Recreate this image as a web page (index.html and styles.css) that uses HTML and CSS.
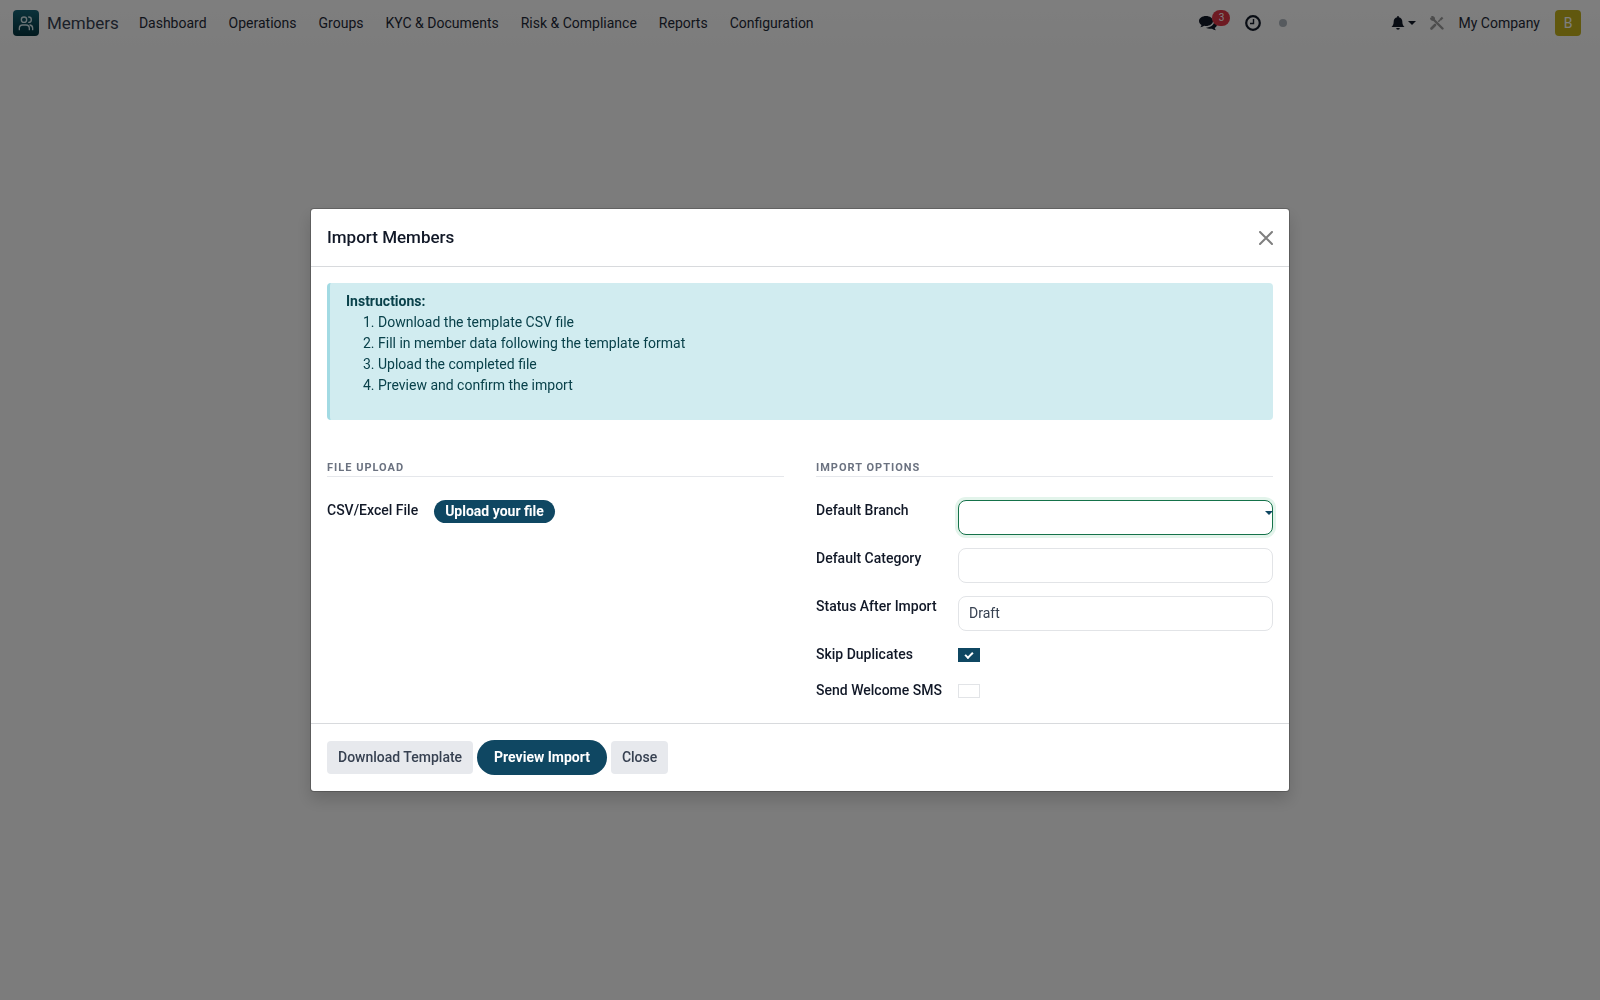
FILE: index.html
```html
<!DOCTYPE html>
<html lang="en">
<head>
    <meta charset="UTF-8">
    <meta name="viewport" content="width=device-width, initial-scale=1.0">
    <title>Members</title>
    <link rel="stylesheet" href="styles.css">
</head>
<body>
    <header class="navbar">
        <a href="#" class="brand">
            <span class="app-icon">
                <svg width="16" height="16" viewBox="0 0 24 24" fill="none" stroke="currentColor" stroke-width="2" stroke-linecap="round">
                    <circle cx="9" cy="7" r="4"/>
                    <path d="M2 22v-2a5 5 0 0 1 5-5h5a5 5 0 0 1 5 5v2"/>
                    <path d="M16 3a4 4 0 0 1 0 8"/>
                    <path d="M18 15a5 5 0 0 1 4 5v2"/>
                </svg>
            </span>
            Members
        </a>
        <nav class="menu">
            <a href="#">Dashboard</a>
            <a href="#">Operations</a>
            <a href="#">Groups</a>
            <a href="#">KYC &amp; Documents</a>
            <a href="#">Risk &amp; Compliance</a>
            <a href="#">Reports</a>
            <a href="#">Configuration</a>
        </nav>
        <div class="systray">
            <button type="button" class="tray-button messages" aria-label="Messages">
                <svg width="18" height="16" viewBox="0 0 18 16" fill="currentColor">
                    <path d="M7 1c3.900 0 7 2.200 7 5s-3.100 5-7 5c-.6 0-1.200 0-1.800-.2-1.100.8-2.500 1.400-4 1.500.7-.7 1.100-1.500 1.300-2.400C1 9 0 7.600 0 6c0-2.800 3.100-5 7-5z"/>
                    <path d="M15.300 6.100c1.700.8 2.700 2 2.700 3.400s-.9 2.600-2.300 3.400c.2.900.7 1.600 1.300 2.300-1.500-.1-2.900-.7-4-1.500-2.100.4-4.400 0-6-1 4.500 0 8.200-2.700 8.300-6.600z"/>
                </svg>
                <span class="badge">3</span>
            </button>
            <button type="button" class="tray-button activities" aria-label="Activities">
                <svg width="16" height="16" viewBox="0 0 16 16" fill="none" stroke="currentColor">
                    <circle cx="8" cy="8" r="6.800" stroke-width="2.200"/>
                    <path d="M8.500 4v4.500H5" stroke-width="1.400"/>
                </svg>
            </button>
            <span class="status-dot"></span>
            <button type="button" class="tray-button bell" aria-label="Notifications">
                <svg width="14" height="14" viewBox="0 0 14 14" fill="currentColor">
                    <path d="M6.200.7a.8.8 0 0 1 1.600 0v.5c2.200.4 3.500 2 3.500 4.100 0 3 .8 4.400 2.200 5.700H.5c1.400-1.300 2.200-2.700 2.200-5.700 0-2.100 1.300-3.700 3.500-4.100z"/>
                    <path d="M5.200 12h3.600a1.800 1.800 0 0 1-3.600 0z"/>
                </svg>
                <span class="caret"></span>
            </button>
            <button type="button" class="tray-button tools" aria-label="Developer tools">
                <svg width="14" height="14" viewBox="0 0 14 14" fill="none" stroke="currentColor">
                    <path d="M3 3l9.500 9.500" stroke-width="2.400" stroke-linecap="round"/>
                    <path d="M1.300 0v1.700H0a3 3 0 0 0 4.600 2.700A3 3 0 0 0 1.300 0z" fill="currentColor" stroke="none"/>
                    <path d="M8.300 5.700l1.700-1.700" stroke-width="1.500"/>
                    <path d="M9.300 3.200l2.500-2.400 1.600 1.400-2.500 2.600z" fill="currentColor" stroke="none"/>
                    <path d="M1.500 12.500l3.500-3.500" stroke-width="2.600" stroke-linecap="round"/>
                </svg>
            </button>
            <a href="#" class="company">My Company</a>
            <button type="button" class="avatar">B</button>
        </div>
    </header>

    <div class="backdrop">
        <form class="modal" role="dialog" aria-labelledby="modalTitle">
            <div class="modal-header">
                <h1 id="modalTitle">Import Members</h1>
                <button type="button" class="close-button" aria-label="Close">
                    <svg width="14" height="14" viewBox="0 0 14 14" fill="none" stroke="currentColor" stroke-width="2" stroke-linecap="round">
                        <path d="M1 1l12 12M13 1L1 13"/>
                    </svg>
                </button>
            </div>

            <div class="modal-body">
                <div class="instructions">
                    <strong>Instructions:</strong>
                    <ol>
                        <li>Download the template CSV file</li>
                        <li>Fill in member data following the template format</li>
                        <li>Upload the completed file</li>
                        <li>Preview and confirm the import</li>
                    </ol>
                </div>

                <div class="groups">
                    <section>
                        <h2>File Upload</h2>
                        <div class="fields upload-fields">
                            <label class="label" for="upload">CSV/Excel File</label>
                            <button type="button" id="upload" class="upload-button">Upload your file</button>
                        </div>
                    </section>
                    <section>
                        <h2>Import Options</h2>
                        <div class="fields">
                            <label class="label" for="branch">Default Branch</label>
                            <div class="dropdown">
                                <input type="text" id="branch" class="control focused">
                                <span class="caret dropdown-caret"></span>
                            </div>
                            <label class="label" for="category">Default Category</label>
                            <input type="text" id="category" class="control">
                            <label class="label" for="status">Status After Import</label>
                            <select id="status" class="control">
                                <option>Draft</option>
                            </select>
                            <label class="label" for="skip">Skip Duplicates</label>
                            <input type="checkbox" id="skip" class="check" checked>
                            <label class="label" for="sms">Send Welcome SMS</label>
                            <input type="checkbox" id="sms" class="check">
                        </div>
                    </section>
                </div>
            </div>

            <div class="modal-footer">
                <button type="button" class="btn">Download Template</button>
                <button type="button" class="btn btn-primary">Preview Import</button>
                <button type="button" class="btn">Close</button>
            </div>
        </form>
    </div>
</body>
</html>
```
FILE: styles.css
```css
* {
    box-sizing: border-box;
}

body {
    margin: 0;
    min-height: 100vh;
    background-color: #f9f9f9;
    color: #374151;
    font-family: Roboto, sans-serif;
    font-size: 14px;
    line-height: 21px;
}

a {
    color: inherit;
    text-decoration: none;
}

button,
input,
select {
    font: inherit;
    color: inherit;
}

button {
    border: none;
    cursor: pointer;
}

svg {
    display: block;
}

/* Top bar */
.navbar {
    display: flex;
    align-items: center;
    height: 46px;
    padding: 0 19px 0 13px;
    background: linear-gradient(#fdfdfd, #f9f9f9);
}

.brand {
    display: flex;
    align-items: center;
    gap: 8px;
    margin-right: 20px;
    font-size: 17px;
}

.app-icon {
    display: flex;
    align-items: center;
    justify-content: center;
    width: 26px;
    height: 26px;
    border-radius: 4px;
    background: linear-gradient(#156475, #04343e);
    color: #d5e8ec;
}

.menu {
    display: flex;
    gap: 22px;
    color: #1f2937;
}

.systray {
    display: flex;
    align-items: center;
    margin-left: auto;
    color: #1f2937;
}

.tray-button {
    display: flex;
    align-items: center;
    padding: 0;
    background: none;
    color: #111827;
}

.messages {
    position: relative;
    margin-right: 28px;
}

.badge {
    position: absolute;
    top: -5px;
    left: 13px;
    width: 18px;
    border-radius: 8px;
    background-color: #dc3545;
    color: #fff;
    font-size: 10px;
    line-height: 16px;
}

.activities {
    margin-right: 18px;
}

.status-dot {
    width: 8px;
    height: 8px;
    margin-right: 104px;
    border-radius: 50%;
    background-color: #adb5bd;
}

.bell {
    gap: 3px;
    margin-right: 14px;
}

.caret {
    border: 4px solid transparent;
    border-top-color: currentColor;
    border-bottom: none;
}

.tools {
    margin-right: 14px;
    color: #9a9a9a;
}

.company {
    margin-right: 15px;
}

.avatar {
    width: 26px;
    height: 26px;
    padding: 0;
    border-radius: 4px;
    background-color: #c2b01c;
    color: #fff;
}

/* Dialog */
.backdrop {
    position: fixed;
    inset: 0;
    display: flex;
    align-items: center;
    justify-content: center;
    background-color: rgba(0, 0, 0, 0.5);
}

.modal {
    width: 100%;
    max-width: 980px;
    border: 1px solid rgba(0, 0, 0, 0.2);
    border-radius: 4px;
    background-color: #fff;
    background-clip: padding-box;
    box-shadow: 0 8px 16px rgba(0, 0, 0, 0.15);
}

.modal-header {
    display: flex;
    align-items: center;
    justify-content: space-between;
    padding: 16px;
    border-bottom: 1px solid #d8dadd;
}

.modal-header h1 {
    margin: 0;
    color: #111827;
    font-size: 17px;
    font-weight: 500;
    line-height: 25px;
}

.close-button {
    padding: 0;
    background: none;
    color: #7f7f7f;
}

.modal-body {
    padding: 16px 16px 20px;
}

.instructions {
    padding: 8px 16px;
    border-left: 3px solid #a2dae3;
    border-radius: 4px;
    background-color: #d1ecf0;
    color: #09414a;
}

.instructions ol {
    margin: 0 0 16px;
    padding-left: 32px;
}

.groups {
    display: grid;
    grid-template-columns: 1fr 1fr;
    gap: 32px;
    margin-top: 40px;
}

.groups h2 {
    margin: 0 0 23px;
    border-bottom: 1px solid #e5e7eb;
    color: #6b7280;
    font-size: 11px;
    font-weight: 700;
    letter-spacing: 1px;
    line-height: 16px;
    text-transform: uppercase;
}

.fields {
    display: grid;
    grid-template-columns: 126px 1fr;
    column-gap: 16px;
    row-gap: 13px;
    align-items: start;
}

.upload-fields {
    grid-template-columns: max-content 1fr;
    justify-items: start;
}

.label {
    color: #111827;
    font-weight: 500;
}

.upload-button {
    padding: 1px 11px;
    border-radius: 12px;
    background-color: #0f4762;
    color: #fff;
    font-weight: 700;
}

.dropdown {
    position: relative;
}

.control {
    display: block;
    width: 100%;
    height: 35px;
    padding: 0 10px;
    border: 1px solid #e2e4e7;
    border-radius: 8px;
    outline: none;
    background-color: #fff;
    appearance: none;
}

.focused {
    border-color: #15724a;
    box-shadow: 0 0 0 3px #e3f4eb;
}

.dropdown-caret {
    position: absolute;
    top: 11px;
    right: 0;
    color: #0f4762;
}

.check {
    display: flex;
    align-items: center;
    justify-content: center;
    width: 22px;
    height: 14px;
    margin: 4px 0 5px;
    border: 1px solid #e2e4e7;
    background-color: #fff;
    appearance: none;
}

.check:checked {
    border-color: #0f4762;
    background-color: #0f4762;
}

.check:checked::before {
    content: "";
    width: 8px;
    height: 5px;
    margin-bottom: 2px;
    border-left: 2px solid #fff;
    border-bottom: 2px solid #fff;
    transform: rotate(-45deg);
    box-sizing: border-box;
}

.modal-footer {
    display: flex;
    align-items: center;
    gap: 4px;
    padding: 16px;
    border-top: 1px solid #d8dadd;
}

.btn {
    padding: 6px 11px;
    border-radius: 4px;
    background-color: #e7e9ed;
    color: #374151;
    font-weight: 500;
}

.btn-primary {
    padding: 7px 17px;
    border-radius: 18px;
    background-color: #0f4762;
    color: #fff;
    font-weight: 700;
}
```
